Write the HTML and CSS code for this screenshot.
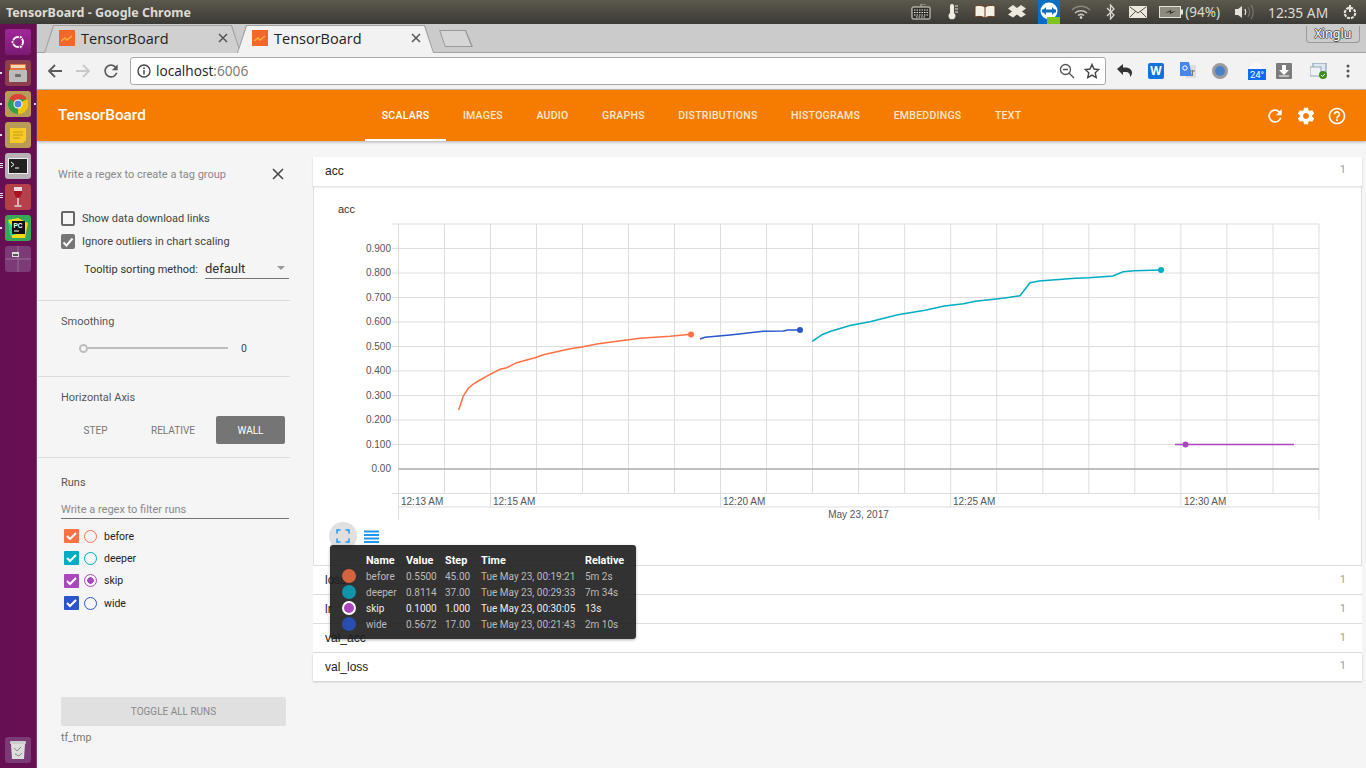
FILE: index.html
```html
<!DOCTYPE html>
<html lang="en">
<head>
    <meta charset="UTF-8">
    <title>TensorBoard - Google Chrome</title>
    <link rel="stylesheet" href="styles.css">
</head>
<body>
    <div class="panel">
        <div class="panel-title">TensorBoard - Google Chrome</div>
        <div class="tray">
            <span class="slot"><svg width="20" height="16" viewBox="0 0 20 16"><rect x="1" y="3" width="18" height="12" rx="1" fill="#2f2e2a" stroke="#e6e2d8"/><path d="M3 6h14M3 8.500h14M3 11h14M5 13h10" stroke="#e6e2d8" stroke-dasharray="1.500 1"/><path d="M10 3V0h5" fill="none" stroke="#bbb7ad"/></svg></span>
            <span class="slot"><svg width="12" height="18" viewBox="0 0 12 18"><path d="M3 3a2 2 0 0 1 4 0v7a3.500 3.500 0 1 1-4 0z" fill="#f0ece2"/><path d="M8 3h3M8 6h3M8 9h3" stroke="#e6e2d8"/></svg></span>
            <span class="slot"><svg width="22" height="16" viewBox="0 0 22 16"><path d="M11 3C8 1 4 1 1 2v11c3-1 7-1 10 1 3-2 7-2 10-1V2c-3-1-7-1-10 1z" fill="#f4f0e6" stroke="#6b3a1c"/><path d="M11 3v11" stroke="#6b3a1c"/></svg></span>
            <span class="slot"><svg width="18" height="15" viewBox="0 0 18 15"><path d="M5 0l4 3 4-3 5 3.500-4 3 4 3-5 3-4-3-4 3-5-3 4-3-4-3z" fill="#ece8de"/></svg></span>
            <span class="slot teamviewer"><svg width="22" height="24" viewBox="0 0 22 24"><rect width="22" height="24" fill="#0a6fc2"/><circle cx="11" cy="11" r="8.500" fill="#fff"/><path d="M4 11h14" stroke="#0a6fc2" stroke-width="3"/><path d="M8 7l-4 4 4 4zM14 7l4 4-4 4z" fill="#0a6fc2"/><rect x="9" y="17" width="13" height="7" fill="#7fc31c"/></svg></span>
            <span class="slot"><svg width="20" height="14" viewBox="0 0 20 14"><g fill="none" stroke="#c8c4ba" stroke-width="1.500"><path d="M1 5c5-5 13-5 18 0" stroke="#8a877e"/><path d="M4 8c3.500-3 8.500-3 12 0"/><path d="M7 10.500c2-1.500 4-1.500 6 0"/></g><circle cx="10" cy="12.500" r="1.300" fill="#e6e2d8"/></svg></span>
            <span class="slot slot-narrow"><svg width="10" height="16" viewBox="0 0 10 16"><path d="M1 4l7 7-3.500 4V1L8 5l-7 7" fill="none" stroke="#dcd8ce" stroke-width="1.300"/></svg></span>
            <span class="slot slot-narrow"><svg width="18" height="12" viewBox="0 0 18 12"><rect width="18" height="12" rx="1" fill="#ece8de"/><path d="M1 1l8 6 8-6M1 11l6-6M17 11l-6-6" fill="none" stroke="#55524a"/></svg></span>
            <span class="battery"><svg width="24" height="12" viewBox="0 0 24 12"><rect x=".5" y=".5" width="21" height="11" fill="#8d8a80" stroke="#e6e2d8"/><rect x="22" y="3.500" width="2" height="5" fill="#e6e2d8"/><path d="M6 7l6-3v2l5-1-6 3V6z" fill="#2f2e2a"/></svg></span>
            <span class="tray-text battery-text">(94%)</span>
            <span class="slot volume"><svg width="20" height="16" viewBox="0 0 20 16"><path d="M1 5h3l4-3v12l-4-3H1z" fill="#e6e2d8"/><path d="M11 5c1 2 1 4 0 6" fill="none" stroke="#e6e2d8" stroke-width="1.300"/><path d="M14 3c2 3 2 7 0 10M17 1c3 4 3 10 0 14" fill="none" stroke="#77746b" stroke-width="1.300"/></svg></span>
            <span class="tray-text clock">12:35 AM</span>
            <span class="slot slot-gear"><svg width="16" height="16" viewBox="0 0 16 16"><circle cx="8" cy="9" r="5.200" fill="none" stroke="#e6e2d8" stroke-width="2.200" stroke-dasharray="3 1"/><path d="M8 1v7" stroke="#e6e2d8" stroke-width="2"/></svg></span>
        </div>
    </div>

    <div class="desktop">
        <div class="launcher">
            <div class="tile tile-ubuntu"><svg width="16" height="16" viewBox="0 0 16 16"><circle cx="8" cy="8" r="5" fill="none" stroke="#fff" stroke-width="2"/><circle cx="2.500" cy="8" r="1.600" fill="#fff" stroke="#8d2088"/><circle cx="10.800" cy="3.200" r="1.600" fill="#fff" stroke="#8d2088"/><circle cx="10.800" cy="12.800" r="1.600" fill="#fff" stroke="#8d2088"/></svg></div>
            <div class="tile tile-files"><span class="pip pip-1"></span><svg width="20" height="20" viewBox="0 0 20 20"><rect x="2" y="1" width="16" height="6" fill="#e0763c"/><rect x="3" y="2" width="14" height="3" fill="#f2d9b0"/><rect x="1" y="7" width="18" height="12" rx="1" fill="#bcbcbc"/><rect x="7" y="11" width="6" height="3" rx="1" fill="#6e6e6e"/></svg></div>
            <div class="tile tile-chrome"><span class="pip pip-1"></span><span class="pip pip-right"></span><svg width="20" height="20" viewBox="0 0 20 20"><circle cx="10" cy="10" r="10" fill="#2fa24b"/><path d="M10 10L1.500 4.500A10 10 0 0 1 19 5.500L10 5z" fill="#db4437"/><path d="M10 10l9-5a10 10 0 0 1-9 15z" fill="#f4c20d"/><circle cx="10" cy="10" r="4.500" fill="#fff"/><circle cx="10" cy="10" r="3.500" fill="#4a86e0"/></svg></div>
            <div class="tile tile-notes"><span class="pip pip-1"></span><svg width="18" height="18" viewBox="0 0 18 18"><path d="M1 2h16v12l-3 3H1z" fill="#f6c927"/><path d="M4 6h10M4 9h10M4 12h7" stroke="#c79a12"/></svg></div>
            <div class="tile tile-term"><span class="pip pip-3"></span><svg width="20" height="16" viewBox="0 0 20 16"><rect width="20" height="16" fill="#eee"/><rect x="1" y="1" width="18" height="14" fill="#222"/><path d="M3 4l3 2.500L3 9" fill="none" stroke="#fff"/><path d="M7 10h4" stroke="#fff"/></svg></div>
            <div class="tile tile-wine"><span class="pip pip-2"></span><svg width="12" height="22" viewBox="0 0 12 22"><path d="M2 1h8v6c0 3-1.500 5-4 5s-4-2-4-5z" fill="#e4dcdc"/><path d="M2 5h8v2c0 3-1.500 5-4 5s-4-2-4-5z" fill="#a81224"/><path d="M6 12v7" stroke="#e4dcdc" stroke-width="1.500"/><path d="M2.500 20h7" stroke="#e4dcdc" stroke-width="1.500"/></svg></div>
            <div class="tile tile-pycharm"><span class="pip pip-1"></span><svg width="20" height="20" viewBox="0 0 20 20"><path d="M0 2l10-2 10 5-3 15H4z" fill="#f4d820"/><path d="M0 2l8 14-6 2z" fill="#21d789"/><rect x="4" y="3" width="13" height="13" fill="#111"/><text class="pc-text" x="5.500" y="10">PC</text><path d="M6 13h5" stroke="#fff"/></svg></div>
            <div class="tile tile-workspace"><svg width="26" height="26" viewBox="0 0 26 26"><path d="M13 0v26M0 13h26" stroke="#9a6a95"/><rect x="7" y="6" width="7" height="5" fill="#ddd"/><rect x="8" y="8" width="5" height="2" fill="#555"/></svg></div>
            <div class="tile tile-trash"><svg width="18" height="20" viewBox="0 0 18 20"><rect x="1" y="1" width="16" height="3" rx="1" fill="#ccc"/><path d="M2 4h14l-1 15H3z" fill="#ddd"/><path d="M5 8l3 3 4-4M6 14l4 2 3-3" stroke="#888" fill="none"/></svg></div>
        </div>

        <div class="browser">
            <div class="tabstrip">
                <div class="tab">
                    <div class="tab-inner">
                        <svg class="favicon" width="16" height="16" viewBox="0 0 16 16"><rect width="16" height="16" fill="#f4672b"/><path d="M2 11l4-3 2 2 5-4" fill="none" stroke="#fbb03b" stroke-width="1.500"/></svg>
                        <span class="tab-title">TensorBoard</span>
                        <svg class="tab-close" width="10" height="10" viewBox="0 0 10 10"><path d="M1 1l8 8M9 1l-8 8" stroke="#555" stroke-width="1.500"/></svg>
                    </div>
                </div>
                <div class="tab tab-active">
                    <div class="tab-inner">
                        <svg class="favicon" width="16" height="16" viewBox="0 0 16 16"><rect width="16" height="16" fill="#f4672b"/><path d="M2 11l4-3 2 2 5-4" fill="none" stroke="#fbb03b" stroke-width="1.500"/></svg>
                        <span class="tab-title">TensorBoard</span>
                        <svg class="tab-close" width="10" height="10" viewBox="0 0 10 10"><path d="M1 1l8 8M9 1l-8 8" stroke="#555" stroke-width="1.500"/></svg>
                    </div>
                </div>
                <div class="new-tab"><div class="new-tab-inner"></div></div>
                <div class="profile">Xinglu</div>
            </div>

            <div class="toolbar">
                <span class="nav-btn"><svg width="16" height="16" viewBox="0 0 16 16"><path d="M15 8H2M8 2L2 8l6 6" fill="none" stroke="#5a5a5a" stroke-width="1.800"/></svg></span>
                <span class="nav-btn"><svg width="16" height="16" viewBox="0 0 16 16"><path d="M1 8h13M8 2l6 6-6 6" fill="none" stroke="#c8c8c8" stroke-width="1.800"/></svg></span>
                <span class="nav-btn"><svg width="20" height="20" viewBox="0 0 24 24"><path fill="#5a5a5a" d="M17.650 6.350A7.958 7.958 0 0 0 12 4c-4.420 0-7.990 3.580-7.990 8s3.570 8 7.990 8c3.730 0 6.840-2.550 7.730-6h-2.080A5.990 5.990 0 0 1 12 18c-3.310 0-6-2.690-6-6s2.690-6 6-6c1.660 0 3.140.690 4.220 1.780L13 11h7V4l-2.350 2.350z"/></svg></span>
                <div class="omnibox">
                    <svg class="info-icon" width="14" height="14" viewBox="0 0 14 14"><circle cx="7" cy="7" r="6" fill="none" stroke="#444" stroke-width="1.400"/><path d="M7 6v4.500M7 3.300v1.600" stroke="#444" stroke-width="1.500"/></svg>
                    <span class="url">localhost<span class="url-port">:6006</span></span>
                    <svg class="omni-icon" width="16" height="16" viewBox="0 0 16 16"><circle cx="6.500" cy="6.500" r="5" fill="none" stroke="#555" stroke-width="1.300"/><path d="M4 6.500h5M10 10l5 5" stroke="#555" stroke-width="1.300"/></svg>
                    <svg class="omni-icon" width="16" height="16" viewBox="0 0 16 16"><path d="M8 1.500l2 4.500 4.800.5-3.600 3.200 1 4.800L8 12.100l-4.200 2.400 1-4.800L1.200 6.500 6 6z" fill="none" stroke="#444" stroke-width="1.400"/></svg>
                </div>
                <div class="extensions">
                    <span class="ext"><svg width="17" height="15" viewBox="0 0 17 15"><path d="M1 6l6-5v3.500c5-.5 9 1.500 9 5 0 2-1 3.500-2 4.500.5-3-1-5-5-5H7v3z" fill="#333"/></svg></span>
                    <span class="ext"><span class="ext-word">W</span></span>
                    <span class="ext"><svg width="16" height="18" viewBox="0 0 16 18"><rect x="6" y="3" width="10" height="13" fill="#ddd"/><path d="M0 0h9l3 14H0z" fill="#4a86e8"/><circle cx="5" cy="6" r="2.200" fill="none" stroke="#fff"/><path d="M10 9h5M12.500 8v6" stroke="#777"/></svg></span>
                    <span class="ext"><svg width="16" height="16" viewBox="0 0 16 16"><circle cx="8" cy="8" r="6.500" fill="#4a7fc9" stroke="#9c9c9c" stroke-width="3"/></svg></span>
                    <span class="ext ext-weather"><span class="cloud"></span><span class="temp">24°</span></span>
                    <span class="ext"><svg width="16" height="16" viewBox="0 0 16 16"><rect width="16" height="16" rx="1" fill="#7d7d7d"/><path d="M6 2h4v5h3l-5 5-5-5h3z" fill="#fff"/><path d="M3 13h10" stroke="#fff"/></svg></span>
                    <span class="ext ext-check"><svg width="18" height="16" viewBox="0 0 18 16"><rect x="3" y="0" width="13" height="10" fill="#dfe7ef" stroke="#7a93ad"/><rect x="0" y="4" width="11" height="9" fill="#eef2f6" stroke="#98a8b8"/><circle cx="13" cy="12" r="4" fill="#3d8b1f"/><path d="M11 12l1.500 1.500L15 11" fill="none" stroke="#fff"/></svg></span>
                    <span class="ext"><svg width="4" height="14" viewBox="0 0 4 14"><circle cx="2" cy="2" r="1.500" fill="#555"/><circle cx="2" cy="7" r="1.500" fill="#555"/><circle cx="2" cy="12" r="1.500" fill="#555"/></svg></span>
                </div>
            </div>

            <div class="tb-header">
                <div class="tb-logo">TensorBoard</div>
                <div class="tb-tabs">
                    <div class="tb-tab tb-tab-active">SCALARS</div>
                    <div class="tb-tab">IMAGES</div>
                    <div class="tb-tab">AUDIO</div>
                    <div class="tb-tab">GRAPHS</div>
                    <div class="tb-tab">DISTRIBUTIONS</div>
                    <div class="tb-tab">HISTOGRAMS</div>
                    <div class="tb-tab">EMBEDDINGS</div>
                    <div class="tb-tab">TEXT</div>
                </div>
                <div class="tb-actions">
                    <svg width="20" height="20" viewBox="0 0 24 24"><path fill="#fff" d="M17.650 6.350A7.958 7.958 0 0 0 12 4c-4.420 0-7.990 3.580-7.990 8s3.570 8 7.990 8c3.730 0 6.840-2.550 7.730-6h-2.080A5.990 5.990 0 0 1 12 18c-3.310 0-6-2.690-6-6s2.690-6 6-6c1.660 0 3.140.690 4.220 1.780L13 11h7V4l-2.350 2.350z"/></svg>
                    <svg width="20" height="20" viewBox="0 0 24 24"><path fill="#fff" d="M19.430 12.980c.040-.320.070-.640.070-.980s-.030-.660-.070-.980l2.110-1.650c.190-.150.240-.420.120-.640l-2-3.460c-.120-.220-.390-.300-.610-.220l-2.490 1c-.520-.400-1.080-.730-1.690-.980l-.380-2.650C14.460 2.180 14.250 2 14 2h-4c-.250 0-.460.180-.490.420l-.380 2.650c-.610.250-1.170.590-1.690.980l-2.490-1c-.230-.090-.490 0-.610.220l-2 3.460c-.130.220-.070.490.120.640l2.110 1.650c-.040.320-.070.650-.070.980s.030.660.070.980l-2.110 1.650c-.190.150-.240.420-.120.640l2 3.460c.120.220.390.300.610.220l2.490-1c.520.400 1.080.730 1.690.980l.380 2.650c.030.240.240.420.490.420h4c.250 0 .460-.180.490-.420l.380-2.650c.610-.250 1.170-.590 1.690-.980l2.490 1c.230.090.490 0 .610-.220l2-3.460c.120-.220.070-.490-.120-.640l-2.110-1.650zM12 15.500c-1.930 0-3.500-1.570-3.500-3.500s1.570-3.500 3.500-3.500 3.500 1.570 3.500 3.500-1.570 3.500-3.500 3.500z"/></svg>
                    <svg width="20" height="20" viewBox="0 0 24 24"><path fill="#fff" d="M11 18h2v-2h-2v2zm1-16C6.480 2 2 6.480 2 12s4.480 10 10 10 10-4.480 10-10S17.520 2 12 2zm0 18c-4.410 0-8-3.590-8-8s3.590-8 8-8 8 3.590 8 8-3.590 8-8 8zm0-14c-2.210 0-4 1.790-4 4h2c0-1.100.900-2 2-2s2 .900 2 2c0 2-3 1.750-3 5h2c0-2.250 3-2.500 3-5 0-2.210-1.790-4-4-4z"/></svg>
                </div>
            </div>

            <div class="tb-main">
                <div class="sidebar">
                    <div class="section section-settings">
                        <div class="tag-row">
                            <span>Write a regex to create a tag group</span>
                            <svg width="12" height="12" viewBox="0 0 12 12"><path d="M1 1l10 10M11 1L1 11" stroke="#444" stroke-width="1.500"/></svg>
                        </div>
                        <div class="check-row"><span class="box"></span>Show data download links</div>
                        <div class="check-row"><span class="box box-on"><svg width="14" height="14" viewBox="0 0 14 14"><path d="M2.500 7.500l3 3 6-7" fill="none" stroke="#fff" stroke-width="2"/></svg></span>Ignore outliers in chart scaling</div>
                        <div class="sort-row">
                            <span class="sort-label">Tooltip sorting method:</span>
                            <div class="select">default<span class="caret"></span></div>
                        </div>
                    </div>
                    <div class="section section-smoothing">
                        <div class="section-label">Smoothing</div>
                        <div class="slider-row">
                            <span class="thumb"></span><span class="track"></span><span class="slider-value">0</span>
                        </div>
                    </div>
                    <div class="section section-axis">
                        <div class="section-label">Horizontal Axis</div>
                        <div class="axis-buttons">
                            <div class="axis-btn">STEP</div>
                            <div class="axis-btn axis-btn-mid">RELATIVE</div>
                            <div class="axis-btn axis-btn-on">WALL</div>
                        </div>
                    </div>
                    <div class="section section-runs">
                        <div class="section-label">Runs</div>
                        <div class="run-filter">Write a regex to filter runs</div>
                        <div class="run-row run-before"><span class="run-box"><svg width="15" height="14" viewBox="0 0 15 14"><path d="M3 7l3 3 6-6" fill="none" stroke="#fff" stroke-width="2"/></svg></span><span class="run-radio"></span>before</div>
                        <div class="run-row run-deeper"><span class="run-box"><svg width="15" height="14" viewBox="0 0 15 14"><path d="M3 7l3 3 6-6" fill="none" stroke="#fff" stroke-width="2"/></svg></span><span class="run-radio"></span>deeper</div>
                        <div class="run-row run-skip"><span class="run-box"><svg width="15" height="14" viewBox="0 0 15 14"><path d="M3 7l3 3 6-6" fill="none" stroke="#fff" stroke-width="2"/></svg></span><span class="run-radio run-radio-on"></span>skip</div>
                        <div class="run-row run-wide"><span class="run-box"><svg width="15" height="14" viewBox="0 0 15 14"><path d="M3 7l3 3 6-6" fill="none" stroke="#fff" stroke-width="2"/></svg></span><span class="run-radio"></span>wide</div>
                        <div class="toggle-runs">TOGGLE ALL RUNS</div>
                        <div class="logdir">tf_tmp</div>
                    </div>
                </div>

                <div class="content">
                    <div class="category category-open">acc<span class="count">1</span></div>
                    <div class="chart-card">
                        <svg class="chart" width="1049" height="334" viewBox="313 186 1049 334">
                            <text class="chart-title" x="338" y="213">acc</text>
                            <path class="grid" d="M398.500 224V493.500M444.500 224V493.500M490.500 224V493.500M536.500 224V493.500M582.500 224V493.500M628.500 224V493.500M674.500 224V493.500M720.500 224V493.500M766.500 224V493.500M812.500 224V493.500M858.600 224V493.500M904.600 224V493.500M950.700 224V493.500M996.700 224V493.500M1042.800 224V493.500M1088.800 224V493.500M1134.800 224V493.500M1180.900 224V493.500M1226.900 224V493.500M1273 224V493.500M1319 224V520"/>
                            <path class="grid" d="M392 224H1319M392 248.500H1319M392 273H1319M392 297.500H1319M392 322H1319M392 346.500H1319M392 371H1319M392 395.500H1319M392 420H1319M392 444.500H1319"/>
                            <path class="grid" d="M392 493.500H1319M398.500 507H1319"/>
                            <path class="grid" d="M398.500 493V520M490.500 493V507M720.500 493V507M950.700 493V507M1180.900 493V507"/>
                            <path class="zero" d="M398.500 469H1319"/>
                            <g class="ylabels">
                                <text x="391" y="251.500">0.900</text>
                                <text x="391" y="276">0.800</text>
                                <text x="391" y="300.500">0.700</text>
                                <text x="391" y="325">0.600</text>
                                <text x="391" y="349.500">0.500</text>
                                <text x="391" y="374">0.400</text>
                                <text x="391" y="398.500">0.300</text>
                                <text x="391" y="423">0.200</text>
                                <text x="391" y="447.500">0.100</text>
                                <text x="391" y="472">0.00</text>
                            </g>
                            <g class="xlabels">
                                <text x="401" y="504.500">12:13 AM</text>
                                <text x="493" y="504.500">12:15 AM</text>
                                <text x="723" y="504.500">12:20 AM</text>
                                <text x="953" y="504.500">12:25 AM</text>
                                <text x="1184" y="504.500">12:30 AM</text>
                                <text class="date" x="858.500" y="518">May 23, 2017</text>
                            </g>
                            <polyline class="line line-before" points="458.700,410 463.300,396 468.300,388.300 473.300,384 480,380 490,374.300 500,369.300 506.700,367.700 516.700,362.700 535,357.700 543.300,354.700 570,348.700 583.300,346.700 596.700,344 613.300,341.700 640,338.300 670,336.300 690.700,334.300"/>
                            <polyline class="line line-wide" points="700,339 705,337.300 730,335 763.300,331.300 783.300,331 788,330 799.700,330"/>
                            <polyline class="line line-deeper" points="812.300,341.300 822,334.700 830.600,331.300 851,325.300 870,321.700 897.800,314.700 925,310.300 944.400,306 963.400,303.700 975.400,301.300 1003,298.300 1020,295.700 1030,282.700 1039,281 1075.400,278.300 1089,277.700 1113,276 1123,271.700 1134,270.700 1161,270"/>
                            <polyline class="line line-skip" points="1175,444.500 1294,444.500"/>
                            <circle class="dot-before" cx="691" cy="334.500" r="3"/>
                            <circle class="dot-wide" cx="800" cy="330" r="3"/>
                            <circle class="dot-deeper" cx="1161" cy="270" r="3"/>
                            <circle class="dot-skip" cx="1185.500" cy="444.500" r="3"/>
                        </svg>
                        <div class="chart-actions">
                            <span class="round-btn"><svg width="14" height="14" viewBox="0 0 14 14"><path d="M1 4.500V1h3.500M9.500 1H13v3.500M13 9.500V13H9.500M4.500 13H1V9.500" fill="none" stroke="#2196f3" stroke-width="1.500"/></svg></span>
                            <svg class="list-icon" width="15" height="13" viewBox="0 0 15 13"><path d="M0 1.500h15M0 5h15M0 8.500h15M0 12h15" stroke="#2196f3" stroke-width="1.800"/></svg>
                        </div>
                    </div>
                    <div class="category">loss<span class="count">1</span></div>
                    <div class="category">lr<span class="count">1</span></div>
                    <div class="category">val_acc<span class="count">1</span></div>
                    <div class="category category-last">val_loss<span class="count">1</span></div>

                    <div class="tooltip">
                        <table>
                            <tr class="tip-head"><th></th><th>Name</th><th>Value</th><th>Step</th><th>Time</th><th>Relative</th></tr>
                            <tr><td><span class="tip-dot tip-before"></span></td><td>before</td><td>0.5500</td><td>45.00</td><td>Tue May 23, 00:19:21</td><td>5m 2s</td></tr>
                            <tr><td><span class="tip-dot tip-deeper"></span></td><td>deeper</td><td>0.8114</td><td>37.00</td><td>Tue May 23, 00:29:33</td><td>7m 34s</td></tr>
                            <tr class="tip-closest"><td><span class="tip-dot tip-skip"></span></td><td>skip</td><td>0.1000</td><td>1.000</td><td>Tue May 23, 00:30:05</td><td>13s</td></tr>
                            <tr><td><span class="tip-dot tip-wide"></span></td><td>wide</td><td>0.5672</td><td>17.00</td><td>Tue May 23, 00:21:43</td><td>2m 10s</td></tr>
                        </table>
                    </div>
                </div>
            </div>
        </div>
    </div>
</body>
</html>
```

FILE: styles.css
```css
* {
    box-sizing: border-box;
}
html, body {
    height: 100%;
}
body {
    margin: 0;
    overflow: hidden;
    font-family: Roboto, sans-serif;
    background: #f5f5f5;
    display: flex;
    flex-direction: column;
}

/* desktop panel */
.panel {
    height: 24px;
    flex: none;
    display: flex;
    align-items: center;
    justify-content: space-between;
    padding: 0 0 0 6px;
    background: linear-gradient(#5b584e, #3c3a35);
    color: #dfdbd2;
}
.panel-title {
    font-family: "Noto Sans", sans-serif;
    font-size: 12.5px;
    font-weight: 700;
}
.tray {
    display: flex;
    align-items: center;
    height: 24px;
    padding-right: 6px;
}
.slot {
    width: 32px;
    height: 24px;
    display: flex;
    align-items: center;
    justify-content: center;
}
.slot-narrow {
    width: 27px;
}
.teamviewer svg {
    display: block;
}
.battery {
    margin-left: 8px;
    margin-right: 2px;
    display: flex;
}
.tray-text {
    font-family: "Noto Sans", sans-serif;
    font-size: 13.5px;
    white-space: nowrap;
}
.volume {
    width: 48px;
}
.clock {
    width: 72px;
    font-size: 13.800px;
}
.slot-gear {
    width: 20px;
}

.desktop {
    flex: 1;
    display: flex;
    min-height: 0;
}

/* launcher */
.launcher {
    width: 37px;
    flex: none;
    background: #661053;
    border-right: 1px solid #7d3a70;
    display: flex;
    flex-direction: column;
    align-items: flex-start;
    gap: 5px;
    padding: 5px 0 5px 5px;
}
.tile {
    width: 26px;
    height: 26px;
    border-radius: 3px;
    display: flex;
    align-items: center;
    justify-content: center;
    position: relative;
}
.tile svg {
    overflow: hidden;
}
.tile-ubuntu { background: linear-gradient(#a0279a, #7b1a72); }
.tile-files { background: #8c3f4c; }
.tile-chrome { background: #b99b55; }
.tile-notes { background: #b99b55; }
.tile-term { background: #b8b2b6; }
.tile-wine { background: #b5404a; }
.tile-pycharm { background: #3aa65a; }
.tile-workspace { background: #7c3a77; }
.tile-trash { background: #7c3a77; margin-top: auto; }
.pc-text {
    font-family: "Liberation Sans", sans-serif;
    font-size: 6.5px;
    font-weight: 700;
    fill: #fff;
}
/* running-app markers, they sit over the launcher edge */
.pip {
    position: absolute;
    left: -5px;
    top: 12px;
    width: 2px;
    height: 2px;
    background: #e8e0e6;
}
.pip-2 {
    box-shadow: 0 -2px 0 #e8e0e6;
    width: 3px;
    height: 1px;
    top: 11px;
}
.pip-2::after {
    content: "";
    position: absolute;
    left: 0;
    top: 2px;
    width: 3px;
    height: 1px;
    background: #e8e0e6;
}
.pip-3 {
    width: 3px;
    height: 1px;
    top: 12px;
    box-shadow: 0 -2px 0 #e8e0e6, 0 2px 0 #e8e0e6;
}
.pip-right {
    left: 29px;
}

/* chrome */
.browser {
    flex: 1;
    min-width: 0;
    display: flex;
    flex-direction: column;
}
.tabstrip {
    height: 29px;
    flex: none;
    display: flex;
    align-items: flex-end;
    background: #cbcbcb;
    border-bottom: 1px solid #a2a2a2;
    padding-left: 7px;
    position: relative;
}
.tab {
    width: 197px;
    height: 28px;
    margin-right: -4px;
    margin-bottom: -1px;
    background: #a2a2a2;
    clip-path: polygon(0 100%, 9px 0, 188px 0, 197px 100%);
    position: relative;
}
.tab-inner {
    height: 100%;
    display: flex;
    align-items: center;
    padding: 0 10px 2px 14px;
    margin: 0 1px;
    background: #d0d0d0;
    clip-path: polygon(0 100%, 9px 1px, 186px 1px, 195px 100%);
}
.tab-active {
    z-index: 1;
}
.tab-active .tab-inner {
    background: #f2f2f2;
}
.favicon {
    flex: none;
}
.tab-title {
    flex: 1;
    margin-left: 6px;
    font-family: "Open Sans", sans-serif;
    font-size: 14.5px;
    color: #222;
}
.tab-close {
    flex: none;
    margin-right: 2px;
}
.new-tab {
    width: 34px;
    height: 17px;
    margin: 0 0 5px 9px;
    background: #9a9a9a;
    clip-path: polygon(0 0, 27px 0, 34px 100%, 6px 100%);
}
.new-tab-inner {
    height: 100%;
    background: #d6d6d6;
    clip-path: polygon(1.500px 1px, 26px 1px, 32px calc(100% - 1px), 6.500px calc(100% - 1px));
}
.profile {
    margin: 2px 6px 0 auto;
    align-self: flex-start;
    width: 54px;
    height: 17px;
    border: 1px solid #9a9a9a;
    border-top: none;
    border-radius: 0 0 4px 4px;
    font-family: "Noto Sans", sans-serif;
    font-size: 12.5px;
    line-height: 16px;
    text-align: center;
    color: #fff;
    text-shadow: 1px 0 0 #555, -1px 0 0 #555, 0 1px 0 #555, 0 -1px 0 #555;
}
.toolbar {
    height: 37px;
    flex: none;
    display: flex;
    align-items: center;
    padding: 0 2px 1px 4px;
    background: #f2f2f2;
    border-bottom: 1px solid #bcbcbc;
}
.nav-btn {
    width: 28px;
    height: 28px;
    flex: none;
    display: flex;
    align-items: center;
    justify-content: center;
}
.omnibox {
    flex: 1;
    height: 28px;
    margin-left: 5px;
    margin-right: 2px;
    display: flex;
    align-items: center;
    gap: 9px;
    padding: 0 5px 0 6px;
    background: #fff;
    border: 1px solid #a9a9a9;
    border-radius: 3px;
}
.url {
    flex: 1;
    margin-left: -4px;
    font-family: "Open Sans", sans-serif;
    font-size: 13.700px;
    color: #222;
}
.url-port {
    color: #777;
}
.extensions {
    display: flex;
}
.ext {
    width: 32px;
    height: 28px;
    display: flex;
    align-items: center;
    justify-content: center;
    position: relative;
}
.ext-word {
    width: 16px;
    height: 16px;
    border-radius: 2px;
    background: #1273de;
    color: #fff;
    font-family: "Liberation Sans", sans-serif;
    font-size: 12px;
    font-weight: 700;
    line-height: 16px;
    text-align: center;
}
.ext-weather {
    left: 4px;
}
.cloud {
    position: absolute;
    top: 6px;
    left: 9px;
    width: 14px;
    height: 6px;
    border-radius: 6px 6px 0 0;
    background: #fafafa;
}
.temp {
    position: absolute;
    top: 12px;
    left: 8px;
    width: 18px;
    height: 11px;
    background: #0f6cf2;
    color: #fff;
    font-size: 9.5px;
    line-height: 11px;
    text-align: center;
}
.ext-check {
    left: 3px;
}

/* tensorboard header */
.tb-header {
    height: 51px;
    flex: none;
    display: flex;
    background: #f57c00;
    color: #fff;
    box-shadow: 0 1px 3px rgba(0,0,0,0.3);
    position: relative;
    z-index: 2;
}
.tb-logo {
    width: 328px;
    flex: none;
    padding-left: 21px;
    font-size: 15.300px;
    font-weight: 500;
    line-height: 51px;
}
.tb-tabs {
    display: flex;
}
.tb-tab {
    padding: 0 16.750px;
    font-size: 10.500px;
    font-weight: 500;
    line-height: 51px;
    letter-spacing: 0.250px;
    color: #fde7d0;
}
.tb-tab-active {
    color: #fff;
    border-bottom: 2px solid #fff;
}
.tb-actions {
    margin-left: auto;
    display: flex;
    align-items: center;
    gap: 11px;
    padding-right: 19px;
}

/* main */
.tb-main {
    flex: 1;
    min-height: 0;
    display: flex;
}
.sidebar {
    width: 252px;
    flex: none;
    margin-left: 1px;
    display: flex;
    flex-direction: column;
    font-size: 11px;
    color: #444;
}
.section {
    border-bottom: 1px solid #dcdcdc;
    padding-left: 23px;
}
.section-settings {
    height: 160px;
    padding-top: 24px;
}
.tag-row {
    display: flex;
    align-items: center;
    justify-content: space-between;
    height: 18px;
    margin-left: -3px;
    padding-right: 6px;
    color: #888;
}
.check-row {
    display: flex;
    align-items: center;
    gap: 7px;
    height: 23.500px;
}
.tag-row + .check-row {
    margin-top: 23.500px;
}
.box {
    width: 14px;
    height: 15px;
    border: 2px solid #666;
    border-radius: 2px;
}
.box-on {
    background: #757575;
    border: none;
    display: flex;
    align-items: center;
    justify-content: center;
}
.sort-row {
    display: flex;
    margin: 4.500px 0 0 23px;
    color: #333;
}
.sort-label {
    padding-top: 5px;
}
.select {
    width: 84px;
    margin-left: 7px;
    height: 21px;
    border-bottom: 1px solid #757575;
    font-size: 13px;
    line-height: 22px;
    position: relative;
}
.caret {
    position: absolute;
    right: 4px;
    top: 8px;
    border: 4px solid transparent;
    border-top: 4px solid #999;
}
.section-smoothing {
    height: 76px;
    padding-top: 14px;
}
.section-label {
    line-height: 14px;
    color: #555;
}
.slider-row {
    display: flex;
    align-items: center;
    height: 14px;
    margin-top: 12px;
    padding-left: 18px;
}
.thumb {
    width: 9px;
    height: 9px;
    flex: none;
    border: 2px solid #bdbdbd;
    border-radius: 50%;
}
.track {
    width: 140px;
    height: 2px;
    background: #bdbdbd;
}
.slider-value {
    margin-left: 13px;
    font-size: 10.500px;
    color: #444;
}
.section-axis {
    height: 81px;
    padding-top: 14px;
}
.axis-buttons {
    display: flex;
    align-items: center;
    margin-top: 11px;
    font-size: 10px;
}
.axis-btn {
    height: 28px;
    line-height: 29px;
    text-align: center;
    width: 69px;
    color: #757575;
    border-radius: 2px;
}
.axis-btn-mid {
    width: 86px;
}
.axis-btn-on {
    background: #757575;
    color: #fff;
}
.section-runs {
    flex: 1;
    border-bottom: none;
    padding-top: 18px;
    display: flex;
    flex-direction: column;
}
.run-filter {
    width: 228px;
    height: 17px;
    margin: 12px 0 6px;
    border-bottom: 1px solid #757575;
    color: #8a8a8a;
    line-height: 16px;
}
.run-row {
    display: flex;
    align-items: center;
    height: 22.300px;
    padding-left: 3px;
    font-size: 10.500px;
    color: #222;
}
.run-box {
    width: 15px;
    height: 14px;
    border-radius: 1px;
    display: flex;
}
.run-radio {
    width: 13px;
    height: 13px;
    margin: 0 7px 0 5px;
    border: 1.500px solid;
    border-radius: 50%;
}
.run-radio-on {
    background: radial-gradient(currentColor 3px, transparent 3.500px);
}
.run-before .run-box { background: #ff7043; }
.run-before .run-radio { color: #ff7043; }
.run-deeper .run-box { background: #00acc1; }
.run-deeper .run-radio { color: #00acc1; }
.run-skip .run-box { background: #ab47bc; }
.run-skip .run-radio { color: #ab47bc; }
.run-wide .run-box { background: #2a55cc; }
.run-wide .run-radio { color: #2a55cc; }
.toggle-runs {
    width: 225px;
    height: 29px;
    margin-top: auto;
    border-radius: 2px;
    background: #e0e0e0;
    color: #888;
    font-size: 10px;
    line-height: 29px;
    text-align: center;
}
.logdir {
    height: 14px;
    margin: 5px 0 23px;
    font-size: 10.500px;
    line-height: 14px;
    color: #777;
}

/* categories */
.content {
    flex: 1;
    min-width: 0;
    margin: 16px 4px 0 23px;
    position: relative;
}
.category {
    height: 29px;
    padding: 0 12px;
    background: #fff;
    border-bottom: 1px solid #ddd;
    font-family: "Liberation Sans", sans-serif;
    font-size: 12px;
    line-height: 29px;
    color: #222;
    display: flex;
    justify-content: space-between;
}
.category-open {
    box-shadow: 0 1px 2px rgba(0,0,0,0.15);
    position: relative;
    border-bottom: none;
}
.category-last {
    height: 28px;
    border-bottom: none;
    box-shadow: 0 1px 2px rgba(0,0,0,0.2);
}
.count {
    margin-right: 4px;
    font-family: Roboto, sans-serif;
    font-size: 11px;
    line-height: 27px;
    color: #a0a0a0;
}
.category-open .count, .category-last .count {
    line-height: 25px;
}
.chart-card {
    height: 380px;
    background: #fff;
    border-left: 1px solid #e0e0e0;
    border-right: 1px solid #e0e0e0;
    border-bottom: 1px solid #ddd;
}
.chart {
    display: block;
    margin-left: -1px;
    font-family: "Liberation Sans", sans-serif;
}
.chart-title {
    font-size: 11px;
    fill: #333;
}
.grid {
    fill: none;
    stroke: #ddd;
    stroke-width: 1;
}
.zero {
    fill: none;
    stroke: #aaa;
    stroke-width: 1.500;
}
.ylabels text {
    font-size: 10px;
    fill: #555;
    text-anchor: end;
}
.xlabels text {
    font-size: 10px;
    fill: #555;
}
.xlabels .date {
    text-anchor: middle;
}
.line {
    fill: none;
    stroke-width: 1.500;
}
.line-before { stroke: #ff7043; }
.line-wide { stroke: #2a55cc; }
.line-deeper { stroke: #00acc1; }
.line-skip { stroke: #ab47bc; }
.dot-before { fill: #ff7043; }
.dot-wide { fill: #2a55cc; }
.dot-deeper { fill: #00acc1; }
.dot-skip { fill: #ab47bc; }
.chart-actions {
    display: flex;
    align-items: center;
    gap: 7px;
    padding: 2px 0 0 15px;
}
.round-btn {
    width: 28px;
    height: 28px;
    border-radius: 50%;
    background: #e0e0e0;
    display: flex;
    align-items: center;
    justify-content: center;
}

/* tooltip */
.tooltip {
    position: absolute;
    left: 17px;
    top: 388px;
    width: 306px;
    padding: 7px 0;
    border-radius: 3px;
    background: rgba(28,28,28,0.9);
    box-shadow: 0 1px 3px rgba(0,0,0,0.3);
    color: #bbb;
    font-size: 10px;
}
.tooltip table {
    width: 100%;
    table-layout: fixed;
    border-collapse: collapse;
}
.tooltip th, .tooltip td {
    height: 16px;
    padding: 0;
    text-align: left;
    white-space: nowrap;
    font-weight: 400;
}
.tooltip tr > :nth-child(1) { width: 36px; }
.tooltip tr > :nth-child(2) { width: 40px; }
.tooltip tr > :nth-child(3) { width: 39px; }
.tooltip tr > :nth-child(4) { width: 36px; }
.tooltip tr > :nth-child(5) { width: 104px; }
.tooltip .tip-head th {
    color: #fff;
    font-weight: 700;
    font-size: 10.800px;
}
.tip-closest {
    color: #eee;
}
.tip-dot {
    display: block;
    width: 14px;
    height: 14px;
    margin-left: 12px;
    border-radius: 50%;
}
.tip-before { background: #d4643f; }
.tip-deeper { background: #0f95a7; }
.tip-skip { background: #ab47bc; border: 2px solid #fff; }
.tip-wide { background: #2a4eb0; }
```
